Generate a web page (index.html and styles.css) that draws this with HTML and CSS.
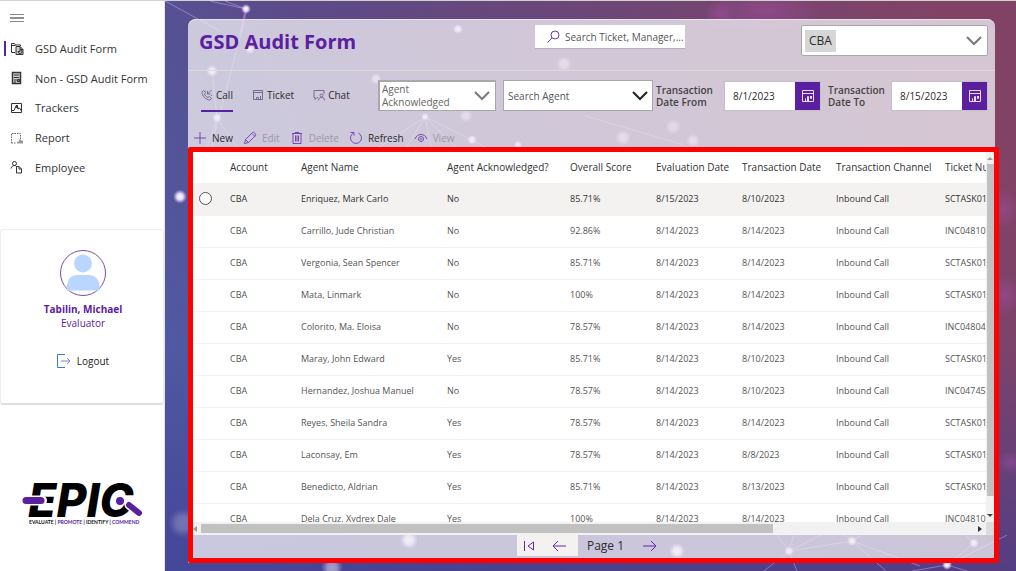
FILE: index.html
```html
<!DOCTYPE html>
<html lang="en">
<head>
<meta charset="utf-8">
<meta name="viewport" content="width=device-width, initial-scale=1">
<title>GSD Audit Form</title>
<link rel="stylesheet" href="styles.css">
</head>
<body>
<div class="app">
  <aside class="sidebar">
    <button class="menu-button" type="button" aria-label="Toggle menu"><svg width="14" height="10" viewBox="0 0 14 10"><path d="M0 1.500h14M0 8.500h14" stroke="#888" stroke-width="1"/><path d="M0 5h14" stroke="#222" stroke-width="1"/></svg></button>
    <nav class="nav">
      <a class="nav-item active" href="#"><svg class="icon" viewBox="0 0 14 14"><path d="M5 10.500H1.500v-9h3l1 1.500h5V4M1.500 3.500h4"/><path d="M6 4.500h4l3 3v5H6z" fill="#ccc"/><path d="M10 4.500v3h3M8 9.500a2 2 0 1 0 2-2v2z"/></svg><span>GSD Audit Form</span></a>
      <a class="nav-item" href="#"><svg class="icon" viewBox="0 0 14 14"><path d="M2.500 1.500h8v11h-8z" fill="#ccc" stroke-width="1.500"/><path d="M4 4h5M4 6.500h5M4 9h3M4 11h2"/><path d="M7.500 8.500h2v2h-2z" fill="#777"/></svg><span>Non - GSD Audit Form</span></a>
      <a class="nav-item" href="#"><svg class="icon" viewBox="0 0 14 14"><path d="M1.500 2.500h10v9h-10z"/><path d="M2 9.500h2L6.500 4 8 8l1.500-1 2 3"/><path d="M6 6l1-2 1 3z" fill="#333"/></svg><span>Trackers</span></a>
      <a class="nav-item" href="#"><svg class="icon" viewBox="0 0 14 14"><path d="M1.500 12V2.500h9V8M1.500 12H6" stroke-dasharray="1.500 1" stroke="#666"/><path d="M8 12.500v-2M10 12.500V8.500M12 12.500v-3" stroke="#777" stroke-width="1.500"/></svg><span>Report</span></a>
      <a class="nav-item" href="#"><svg class="icon" viewBox="0 0 14 14"><circle cx="4.500" cy="3.500" r="2"/><path d="M1 8.500C1.500 6.500 3 5.500 4.500 5.500S6 6 6.500 6.500"/><path d="M6.500 6.500H9l2.500 2.500v4h-5zM9 6.500V9h2.500"/></svg><span>Employee</span></a>
    </nav>
    <section class="profile">
      <svg class="avatar" viewBox="0 0 46 46"><circle cx="23" cy="23" r="22.500" fill="#fff" stroke="#7b4bb0"/><circle cx="23" cy="13.500" r="9" fill="#b9d6ff"/><path d="M7 40.500v-4c0-7 4-11.500 10-11.500h12c6 0 10.500 4.500 10.500 11.500v4z" fill="#b9d6ff"/></svg>
      <strong class="profile-name">Tabilin, Michael</strong>
      <span class="profile-role">Evaluator</span>
      <button class="logout" type="button"><svg width="14" height="14" viewBox="0 0 14 14" fill="none" stroke="#3f7bc4"><path d="M8 .5H.5v13H8"/><path d="M4 7h9M10 4l3 3-3 3" stroke="#7c86c8"/></svg><span>Logout</span></button>
    </section>
    <div class="logo" role="img" aria-label="EPIC">
      <svg width="124" height="46" viewBox="0 0 124 46">
        <text class="logo-word" x="6" y="37">EPIC</text>
        <path d="M4 20.500h16" stroke="#fff" stroke-width="10" stroke-linecap="round"/>
        <path d="M4 20.500h15" stroke="#5b20a0" stroke-width="7" stroke-linecap="round"/>
        <circle cx="98" cy="21" r="4" fill="#5b20a0"/>
        <path d="M107 25l10 8" stroke="#fff" stroke-width="9" stroke-linecap="round"/>
        <path d="M107 25l10 8" stroke="#5b20a0" stroke-width="6" stroke-linecap="round"/>
        <text class="logo-tag" x="7" y="44">EVALUATE | <tspan class="violet">PROMOTE</tspan> | IDENTIFY | <tspan class="violet">COMMEND</tspan></text>
      </svg>
    </div>
  </aside>

  <main class="main">
    <svg class="backdrop" viewBox="0 0 851 571" preserveAspectRatio="none" aria-hidden="true">
      <defs>
        <linearGradient id="sky" x1="0" y1="0.600" x2="1" y2="0.300"><stop offset="0" stop-color="#5059a2"/><stop offset=".3" stop-color="#5c4a88"/><stop offset=".6" stop-color="#6b4678"/><stop offset="1" stop-color="#824265"/></linearGradient>
        <linearGradient id="low" x1="0" y1="0" x2="0" y2="1"><stop offset=".6" stop-color="#3d3a90" stop-opacity="0"/><stop offset="1" stop-color="#3d3a90" stop-opacity=".6"/></linearGradient>
        <radialGradient id="glow"><stop offset="0" stop-color="#a850a8" stop-opacity=".45"/><stop offset="1" stop-color="#a850a8" stop-opacity="0"/></radialGradient>
        <radialGradient id="dot"><stop offset="0" stop-color="#fff"/><stop offset=".45" stop-color="#f6e8ff" stop-opacity=".9"/><stop offset="1" stop-color="#d9b8ff" stop-opacity="0"/></radialGradient>
      </defs>
      <rect width="851" height="571" fill="url(#sky)"/>
      <rect width="851" height="571" fill="url(#low)"/>
      <g fill="url(#glow)"><ellipse cx="555" cy="13" rx="16" ry="14"/><ellipse cx="600" cy="10" rx="60" ry="20"/><ellipse cx="838" cy="208" rx="16" ry="20"/><ellipse cx="840" cy="295" rx="16" ry="20"/><ellipse cx="846" cy="462" rx="16" ry="12"/></g>
      <g stroke="#dcb8ff" stroke-opacity=".45" fill="none">
        <path d="M45 0l36 8-5 24-26 100M81 8L60 0M0 0l55 30M47 70l5 47-20 60M52 117l40 60M52 117l-10 60M260 116l-60 40M260 116l-30 50M260 116l10 50M260 116l40 40M260 116l60 30M420 115l98 29"/>
        <path d="M624 551l12-40M624 551l63-10M624 551l90-45M624 551l8 20M624 551l-25 20M624 551l-30-40M687 541l-40-30M687 541l50-30M687 541l34 30M687 541l68 25M809 543l-40-36M809 543l-27 22M782 565l-35 6M782 565l20 6M782 565l60-30"/>
      </g>
      <path d="M81 8l-5 24" stroke="#a868d8" stroke-width="3" stroke-opacity=".6"/>
      <g fill="url(#dot)"><circle cx="81" cy="8" r="5"/><circle cx="85" cy="48" r="5"/><circle cx="47" cy="70" r="6"/><circle cx="52" cy="117" r="5"/><circle cx="211" cy="78" r="6" opacity=".7"/><circle cx="260" cy="116" r="4"/><circle cx="293" cy="28" r="5"/><circle cx="307" cy="139" r="5"/><circle cx="353" cy="144" r="4"/><circle cx="301" cy="115" r="7" opacity=".6"/><circle cx="399" cy="63" r="8" opacity=".6"/><circle cx="458" cy="137" r="8" opacity=".6"/><circle cx="508" cy="126" r="8" opacity=".5"/><circle cx="528" cy="140" r="7" opacity=".6"/><circle cx="15" cy="196" r="7"/><circle cx="18" cy="523" r="15" opacity=".25"/><circle cx="244" cy="540" r="9"/><circle cx="167" cy="568" r="11" opacity=".5"/><circle cx="512" cy="551" r="8"/><circle cx="624" cy="551" r="5"/><circle cx="687" cy="541" r="5"/><circle cx="809" cy="543" r="5"/><circle cx="782" cy="565" r="5"/></g>
    </svg>

    <div class="panel">
      <header class="panel-header">
        <h1 class="title">GSD Audit Form</h1>
        <label class="search"><svg width="13" height="13" viewBox="0 0 13 13" fill="none" stroke="#6b3fa8"><circle cx="8" cy="5" r="4"/><path d="M5 8L.5 12.500"/></svg><input type="text" placeholder="Search Ticket, Manager,..." aria-label="Search"></label>
        <span class="combo account"><select aria-label="Account"><option>CBA</option></select><svg class="chevron" viewBox="0 0 16 10"><path d="M1 1l7 7 7-7"/></svg></span>
      </header>

      <div class="filters">
        <div class="tabs" role="tablist">
          <button class="tab selected" role="tab" aria-selected="true" type="button"><svg viewBox="0 0 12 12"><path d="M2.500 1.500L1 3c0 4 4 8 8 8l1.500-1.500-2-2-1.500 1C5.500 8 4 6.500 3.500 5l1-1.500z"/><path d="M10.500 1L6.500 5M6.500 2v3h3M5 1.500l-.5 1M11 6l-1 1"/></svg><span>Call</span></button>
          <button class="tab" role="tab" aria-selected="false" type="button"><svg viewBox="0 0 12 12"><path d="M1.500 1.500h9v9h-9zM1.500 3.500h9M4.500 10.500V8.500h2v2M8.500 10.500V7"/></svg><span>Ticket</span></button>
          <button class="tab" role="tab" aria-selected="false" type="button"><svg viewBox="0 0 12 12"><path d="M5 8.500H4l-2 2v-2H1v-7h10V5"/><circle cx="8.500" cy="6.500" r="1.500"/><path d="M5.500 11.500c0-2 1-3 3-3s3 1 3 3"/></svg><span>Chat</span></button>
        </div>
        <label class="combo ack"><span class="combo-text">Agent Acknowledged</span><select><option></option><option>Yes</option><option>No</option></select><svg class="chevron" viewBox="0 0 16 10"><path d="M1 1l7 7 7-7"/></svg></label>
        <label class="combo agent"><input type="text" placeholder="Search Agent" aria-label="Search Agent"><svg class="chevron dark" viewBox="0 0 16 10"><path d="M1 1l7 7 7-7"/></svg></label>
        <label class="date-label" for="from">Transaction Date From</label>
        <div class="date"><input id="from" type="text" value="8/1/2023"><button type="button" aria-label="Pick start date"><svg viewBox="0 0 14 14"><path d="M1.500 1.500h11v11h-11zM1.500 4.500h11M4.500 12V9.500M6.500 12V7.500h1V12M9.500 7v2.500h1V7"/></svg></button></div>
        <label class="date-label to" for="to">Transaction Date To</label>
        <div class="date"><input id="to" type="text" value="8/15/2023"><button type="button" aria-label="Pick end date"><svg viewBox="0 0 14 14"><path d="M1.500 1.500h11v11h-11zM1.500 4.500h11M4.500 12V9.500M6.500 12V7.500h1V12M9.500 7v2.500h1V7"/></svg></button></div>
      </div>

      <div class="toolbar">
        <button type="button"><svg viewBox="0 0 14 14"><path d="M7 1v12M1 7h12"/></svg><span>New</span></button>
        <button type="button" disabled><svg viewBox="0 0 14 14"><path d="M1.500 12.500l1-4 7-7c1-1 4 1.500 3 3l-7 7zM2.500 8.500l3 3M9 2.500l3 3"/></svg><span>Edit</span></button>
        <button type="button" disabled><svg viewBox="0 0 14 14"><path d="M2 2.500h10M5 2.500v-1h4v1M3 2.500v10h8v-10M5.500 4.500v6M7 4.500v6M8.500 4.500v6"/></svg><span>Delete</span></button>
        <button type="button"><svg viewBox="0 0 14 14"><path d="M4.500 2A5.500 5.500 0 1 0 9.500 2M1.500 1.500h3.500v3"/></svg><span>Refresh</span></button>
        <button type="button" disabled><svg viewBox="0 0 14 14"><path d="M1 8c2-6 10-6 12 0"/><circle cx="7" cy="8" r="2.500"/><circle cx="7" cy="8" r=".5"/></svg><span>View</span></button>
      </div>

      <section class="results">
        <div class="grid">
          <div class="table-view">
            <table>
              <colgroup><col class="c-pick"><col class="c-account"><col class="c-name"><col class="c-ack"><col class="c-date"><col class="c-date"><col class="c-trans"><col class="c-channel"><col></colgroup>
              <thead><tr><th></th><th>Account</th><th>Agent Name</th><th>Agent Acknowledged?</th><th>Overall Score</th><th>Evaluation Date</th><th>Transaction Date</th><th>Transaction Channel</th><th>Ticket Number</th></tr></thead>
              <tbody>
                <tr class="current"><td><input type="radio" name="row" aria-label="Select Enriquez, Mark Carlo"></td><td>CBA</td><td>Enriquez, Mark Carlo</td><td>No</td><td>85.71%</td><td>8/15/2023</td><td>8/10/2023</td><td>Inbound Call</td><td>SCTASK011</td></tr>
                <tr><td></td><td>CBA</td><td>Carrillo, Jude Christian</td><td>No</td><td>92.86%</td><td>8/14/2023</td><td>8/14/2023</td><td>Inbound Call</td><td>INC048107</td></tr>
                <tr><td></td><td>CBA</td><td>Vergonia, Sean Spencer</td><td>No</td><td>85.71%</td><td>8/14/2023</td><td>8/14/2023</td><td>Inbound Call</td><td>SCTASK011</td></tr>
                <tr><td></td><td>CBA</td><td>Mata, Linmark</td><td>No</td><td>100%</td><td>8/14/2023</td><td>8/14/2023</td><td>Inbound Call</td><td>SCTASK011</td></tr>
                <tr><td></td><td>CBA</td><td>Colorito, Ma. Eloisa</td><td>No</td><td>78.57%</td><td>8/14/2023</td><td>8/14/2023</td><td>Inbound Call</td><td>INC048045</td></tr>
                <tr><td></td><td>CBA</td><td>Maray, John Edward</td><td>Yes</td><td>85.71%</td><td>8/14/2023</td><td>8/10/2023</td><td>Inbound Call</td><td>SCTASK011</td></tr>
                <tr><td></td><td>CBA</td><td>Hernandez, Joshua Manuel</td><td>No</td><td>78.57%</td><td>8/14/2023</td><td>8/10/2023</td><td>Inbound Call</td><td>INC047457</td></tr>
                <tr><td></td><td>CBA</td><td>Reyes, Sheila Sandra</td><td>Yes</td><td>78.57%</td><td>8/14/2023</td><td>8/14/2023</td><td>Inbound Call</td><td>SCTASK011</td></tr>
                <tr><td></td><td>CBA</td><td>Laconsay, Em</td><td>Yes</td><td>78.57%</td><td>8/14/2023</td><td>8/8/2023</td><td>Inbound Call</td><td>SCTASK011</td></tr>
                <tr><td></td><td>CBA</td><td>Benedicto, Aldrian</td><td>Yes</td><td>85.71%</td><td>8/14/2023</td><td>8/13/2023</td><td>Inbound Call</td><td>SCTASK011</td></tr>
                <tr><td></td><td>CBA</td><td>Dela Cruz, Xydrex Dale</td><td>Yes</td><td>100%</td><td>8/14/2023</td><td>8/14/2023</td><td>Inbound Call</td><td>INC048108</td></tr>
              </tbody>
            </table>
          </div>
          <div class="vbar"><svg width="6" height="4" viewBox="0 0 6 4"><path d="M0 4l3-3 3 3z" fill="#999"/></svg><i></i><svg width="6" height="4" viewBox="0 0 6 4"><path d="M0 0h6L3 3z" fill="#444"/></svg></div>
          <div class="hbar"><svg width="4" height="6" viewBox="0 0 4 6"><path d="M4 0v6L0 3z" fill="#999"/></svg><div class="track"><i></i></div><svg width="4" height="6" viewBox="0 0 4 6"><path d="M0 0v6l4-3z" fill="#333"/></svg></div>
          <div class="corner"></div>
        </div>
        <footer class="pager">
          <div class="pager-back">
            <button type="button" aria-label="First page"><svg width="12" height="12" viewBox="0 0 12 12"><path d="M1.500 1v10M10.500 2v8L5 6z"/></svg></button>
            <button type="button" aria-label="Previous page"><svg width="14" height="12" viewBox="0 0 14 12"><path d="M14 6H1M6 1L1 6l5 5"/></svg></button>
          </div>
          <span>Page 1</span>
          <button type="button" aria-label="Next page"><svg width="14" height="12" viewBox="0 0 14 12"><path d="M0 6h13M8 1l5 5-5 5"/></svg></button>
        </footer>
      </section>
    </div>
  </main>
</div>
</body>
</html>
```
FILE: styles.css
```css
* { box-sizing: border-box; }
body { margin: 0; font-family: "Open Sans", "Noto Sans", sans-serif; font-size: 10px; color: #2b2b2b; }
button, input, select { font: inherit; color: inherit; margin: 0; padding: 0; border: 0; background: none; border-radius: 0; }
button { cursor: pointer; }
svg { display: block; flex: none; fill: none; }

.app { display: grid; grid-template-columns: 165px minmax(0, 1fr); height: 100vh; border-top: 1px solid #d2d3cc; }

.sidebar { display: flex; flex-direction: column; background: #fff; border-right: 1px solid #e4e4e8; }
.menu-button { height: 33px; padding-left: 10px; align-self: flex-start; }
.nav { display: flex; flex-direction: column; height: 148px; }
.nav-item { display: flex; align-items: center; flex: 1; gap: 11px; padding-left: 10px; color: #333; text-decoration: none; font-size: 11px; }
.nav-item.active { background: linear-gradient(#5b20a0, #5b20a0) 4px center / 2px 15px no-repeat; }
.icon { width: 14px; height: 14px; stroke: #333; }
.profile { display: flex; flex-direction: column; align-items: center; margin-top: 47px; height: 176px; padding: 20px 0 0 2px; border: 1px solid #ededed; border-bottom: 2px solid #dedede; border-radius: 3px; color: #5b20a0; }
.avatar { width: 46px; height: 46px; }
.profile-name { margin-top: 6px; font-size: 10px; line-height: 15px; }
.profile-role { font-size: 10px; line-height: 13px; }
.logout { display: flex; align-items: center; gap: 6px; margin-top: 24px; color: #222; }
.logo { margin: 75px 0 0 22px; }
.logo-word { font: italic 800 46px Inter, sans-serif; fill: #000; }
.logo-tag { font: 700 5px Lato, sans-serif; fill: #111; }
.violet { fill: #5b20a0; }

.main { position: relative; display: flex; padding: 18px 21px 8px 23px; overflow: hidden; }
.backdrop { position: absolute; inset: 0; width: 100%; height: 100%; }
.panel { position: relative; display: flex; flex-direction: column; flex: 1; min-width: 0; background: rgba(238, 236, 242, .78); border-radius: 8px 8px 0 0; box-shadow: inset 0 1px 0 #e8e2ec; }

.panel-header { display: flex; align-items: flex-start; height: 52px; padding: 6px 7px 0 11px; border-bottom: 1px solid #dcd9d9; }
.title { flex: 1 0 336px; margin: 0; font-size: 20px; line-height: 34px; font-weight: 700; color: #5b20a0; }
.search { display: flex; align-items: center; gap: 5px; flex: none; width: 150px; height: 24px; padding: 0 2px 0 12px; background: #fff; border-bottom: 1px solid #b5b0b5; }
.search input { flex: 1; min-width: 0; }
input::placeholder { color: #555; opacity: 1; }

.combo { display: grid; align-items: center; height: 31px; background: #fff; border: 1px solid #aaa6ac; }
.combo > * { grid-area: 1 / 1; }
.combo select, .combo input { width: 100%; height: 100%; padding-left: 4px; appearance: none; outline: 0; }
.combo-text { padding-left: 2px; width: 80px; line-height: 13px; color: #666; }
.chevron { justify-self: end; width: 16px; height: 10px; margin-right: 5px; stroke: #7a7a7a; stroke-width: 2; pointer-events: none; }
.chevron.dark { stroke: #222; margin-right: 4px; }
.account { width: 187px; margin-left: 116px; border-radius: 2px; }
.account select { padding-left: 7px; font-size: 12px; background: linear-gradient(#d6d6d6, #d6d6d6) 3px center / 31px 22px no-repeat; }
.ack { flex: 0 1 118px; margin-left: 30px; border-width: 2px 1px 1px 2px; }
.agent { flex: 0 1 150px; margin-left: 7px; }

.filters { display: flex; align-items: center; height: 49px; padding: 0 7px 0 13px; }
.tabs { display: flex; gap: 19px; width: 147px; flex: none; }
.tab { display: flex; align-items: center; gap: 3px; height: 33px; border-bottom: 2px solid transparent; }
.tab.selected { border-color: #5b20a0; }
.tab svg { width: 12px; height: 12px; stroke: #67537f; stroke-width: .8; }
.date-label { flex: none; width: 71px; padding-left: 3px; font-weight: 600; line-height: 12px; color: #444; }
.date-label.to { width: 70px; padding-left: 7px; }
.date { display: flex; flex: 0 1 97px; min-width: 0; height: 30px; background: #fff; border: 1px solid #c4bfc8; }
.date input { flex: 1; min-width: 0; padding-left: 8px; }
.date button { display: grid; place-items: center; flex: none; width: 25px; background: #5b20a0; }
.date svg { width: 14px; height: 14px; stroke: #e6dcf5; }

.toolbar { display: flex; align-items: center; gap: 10px; height: 27px; padding: 8px 0 0 5px; }
.toolbar button { display: flex; align-items: center; gap: 5px; }
.toolbar button:disabled { color: #9d98a3; }
.toolbar svg { width: 14px; height: 14px; stroke: #6b3fa8; stroke-width: .9; }

.results { display: flex; flex-direction: column; flex: 1; min-height: 0; margin-right: -4px; border: 5px solid #f00; border-radius: 2px; }
.grid { display: grid; grid-template: minmax(0, 1fr) 13px / minmax(0, 1fr) 8px; flex: 1; min-height: 0; background: #fff; }
.table-view { overflow: hidden; }
table { width: 100%; table-layout: fixed; border-collapse: collapse; font-size: 9px; color: #555; }
th, td { height: 32px; padding: 0 0 2px; text-align: left; white-space: nowrap; border-bottom: 1px solid #f3f2f1; }
th { height: 31px; padding: 0; font-size: 10px; font-weight: 500; color: #333; }
.current { background: #f3f2f1; color: #333; }
.current input { appearance: none; display: block; width: 13px; height: 13px; margin-left: 6px; border: 1px solid #555; border-radius: 50%; background: #fff; }
.c-pick { width: 37px; }
.c-account { width: 71px; }
.c-name { width: 146px; }
.c-ack { width: 123px; }
.c-date { width: 86px; }
.c-trans { width: 94px; }
.c-channel { width: 109px; }
.vbar { display: flex; flex-direction: column; align-items: center; gap: 4px; padding: 4px 0; background: #f1f1f1; }
.vbar i { width: 7px; flex: 1; margin-bottom: 14px; background: #c1c1c1; }
.hbar { display: flex; align-items: center; gap: 4px; padding-right: 4px; background: #f1f1f1; }
.track { flex: 1; }
.track i { display: block; width: 74%; height: 9px; background: #c1c1c1; }
.corner { background: #dcdcdc; }

.pager { display: flex; align-items: flex-start; justify-content: center; height: 23px; padding-right: 13px; font-size: 12px; line-height: 21px; }
.pager svg { stroke: #6427a8; }
.pager button { display: grid; place-items: center; height: 21px; }
.pager > button { margin-left: 19px; }
.pager-back { display: flex; gap: 17px; padding: 0 12px 0 6px; margin-right: 9px; background: #f3f2f1; }
```
